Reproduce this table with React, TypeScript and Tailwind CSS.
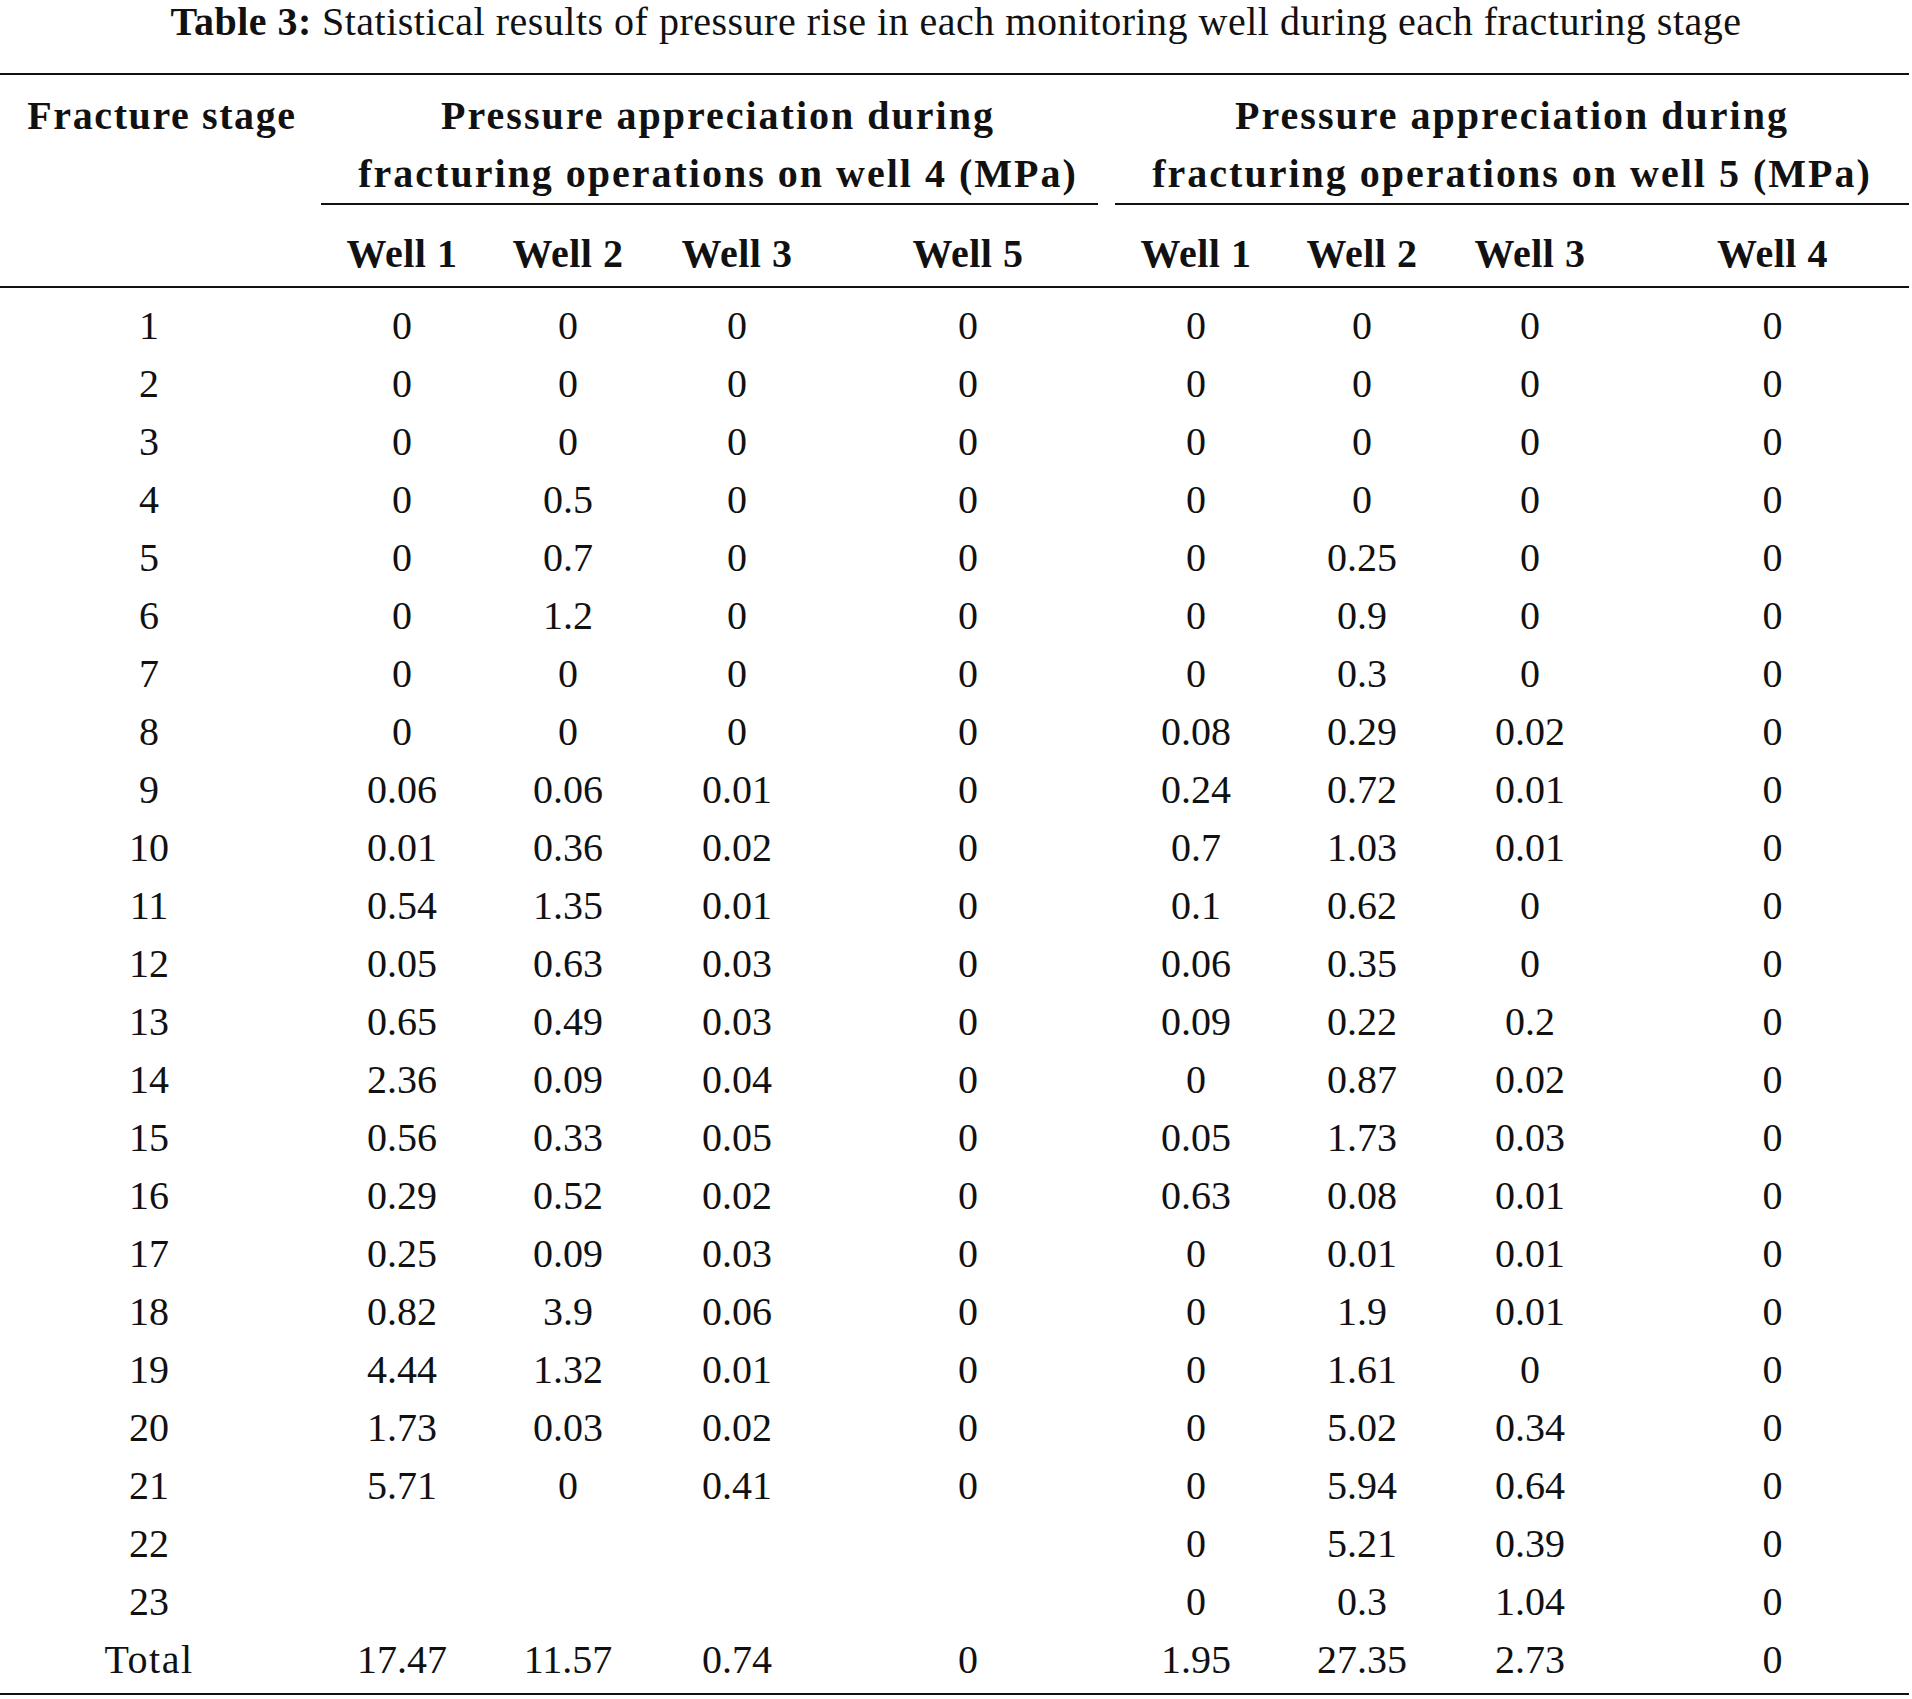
const cols = 'grid grid-cols-[298px_208px_124px_214px_248px_208px_124px_212px_273px]';

const wells = ['Well 1', 'Well 2', 'Well 3', 'Well 5', 'Well 1', 'Well 2', 'Well 3', 'Well 4'];

const rows: string[][] = [
  ['1', '0', '0', '0', '0', '0', '0', '0', '0'],
  ['2', '0', '0', '0', '0', '0', '0', '0', '0'],
  ['3', '0', '0', '0', '0', '0', '0', '0', '0'],
  ['4', '0', '0.5', '0', '0', '0', '0', '0', '0'],
  ['5', '0', '0.7', '0', '0', '0', '0.25', '0', '0'],
  ['6', '0', '1.2', '0', '0', '0', '0.9', '0', '0'],
  ['7', '0', '0', '0', '0', '0', '0.3', '0', '0'],
  ['8', '0', '0', '0', '0', '0.08', '0.29', '0.02', '0'],
  ['9', '0.06', '0.06', '0.01', '0', '0.24', '0.72', '0.01', '0'],
  ['10', '0.01', '0.36', '0.02', '0', '0.7', '1.03', '0.01', '0'],
  ['11', '0.54', '1.35', '0.01', '0', '0.1', '0.62', '0', '0'],
  ['12', '0.05', '0.63', '0.03', '0', '0.06', '0.35', '0', '0'],
  ['13', '0.65', '0.49', '0.03', '0', '0.09', '0.22', '0.2', '0'],
  ['14', '2.36', '0.09', '0.04', '0', '0', '0.87', '0.02', '0'],
  ['15', '0.56', '0.33', '0.05', '0', '0.05', '1.73', '0.03', '0'],
  ['16', '0.29', '0.52', '0.02', '0', '0.63', '0.08', '0.01', '0'],
  ['17', '0.25', '0.09', '0.03', '0', '0', '0.01', '0.01', '0'],
  ['18', '0.82', '3.9', '0.06', '0', '0', '1.9', '0.01', '0'],
  ['19', '4.44', '1.32', '0.01', '0', '0', '1.61', '0', '0'],
  ['20', '1.73', '0.03', '0.02', '0', '0', '5.02', '0.34', '0'],
  ['21', '5.71', '0', '0.41', '0', '0', '5.94', '0.64', '0'],
  ['22', '', '', '', '', '0', '5.21', '0.39', '0'],
  ['23', '', '', '', '', '0', '0.3', '1.04', '0'],
  ['Total', '17.47', '11.57', '0.74', '0', '1.95', '27.35', '2.73', '0'],
];

export default function App() {
  return (
    <div className="w-[1912px] min-h-[1699px] bg-white text-[#111] font-['Liberation_Serif',serif]">
      {/* caption */}
      <div className="h-[73px] text-center text-[40px] leading-[44px] tracking-[0.5px]">
        <span className="font-bold mr-[10px]">Table 3:</span>
        Statistical results of pressure rise in each monitoring well during each fracturing stage
      </div>

      <div className="w-[1909px] border-t-2 border-b-2 border-[#111] text-[40px] leading-[58px]">
        {/* group header */}
        <div className="flex pt-[12px] font-bold">
          <div className="w-[321px] pl-[3px] text-center tracking-[1.6px]">Fracture stage</div>
          <div className="w-[777px] pl-[17px] text-center tracking-[2px] border-b-2 border-[#111]">
            <div>Pressure appreciation during</div>
            <div>fracturing operations on well 4 (MPa)</div>
          </div>
          <div className="w-[794px] ml-[17px] text-center tracking-[2px] border-b-2 border-[#111]">
            <div>Pressure appreciation during</div>
            <div>fracturing operations on well 5 (MPa)</div>
          </div>
        </div>

        {/* well names */}
        <div className={`${cols} pt-[20px] pb-[3px] font-bold tracking-[0.5px] border-b-2 border-[#111]`}>
          <div />
          {wells.map((w, i) => (
            <div key={i} className="text-center">
              {w}
            </div>
          ))}
        </div>

        {/* body */}
        <div className="pt-[9px] pb-[4px]">
          {rows.map((r, i) => (
            <div key={i} className={`${cols} h-[58px]`}>
              {r.map((c, j) => (
                <div key={j} className={j === 0 && c === 'Total' ? 'text-center tracking-[1.5px]' : 'text-center'}>
                  {c}
                </div>
              ))}
            </div>
          ))}
        </div>
      </div>
    </div>
  );
}
